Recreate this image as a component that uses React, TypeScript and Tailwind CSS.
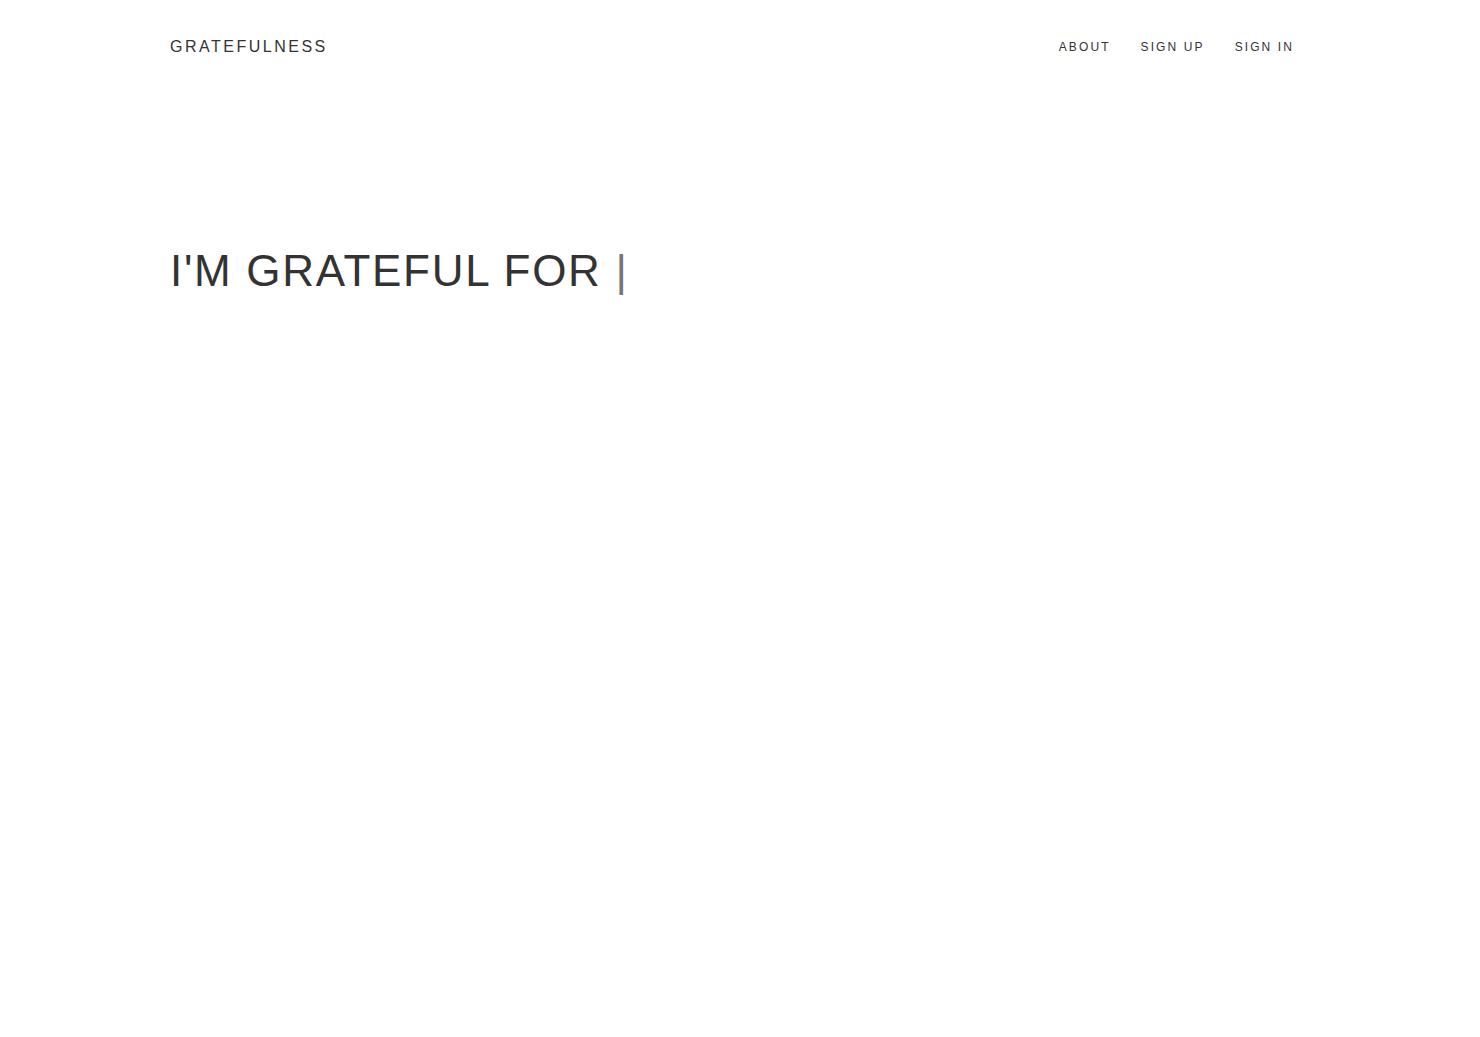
import React from 'react';

export default function App() {
  return (
    <div className="min-h-screen bg-white text-[#333] font-['Liberation_Sans',Arial,sans-serif]">
      <header className="mx-auto w-[1140px] flex items-center justify-between pt-[38px]">
        <a href="#" className="text-[16px] leading-[18px] tracking-[2.5px] text-[#333]">GRATEFULNESS</a>
        <nav className="flex items-center gap-[30px] text-[12px] leading-[18px] tracking-[2.1px] text-[#333] pr-[16px]">
          <a href="#">ABOUT</a>
          <a href="#">SIGN UP</a>
          <a href="#">SIGN IN</a>
        </nav>
      </header>

      <main className="mx-auto w-[1140px] pt-[187px]">
        <h1 className="text-[44px] leading-[56px] tracking-[1.7px] text-[#333]">
          I'M GRATEFUL FOR <span className="text-[#777]">|</span>
        </h1>
      </main>
    </div>
  );
}
